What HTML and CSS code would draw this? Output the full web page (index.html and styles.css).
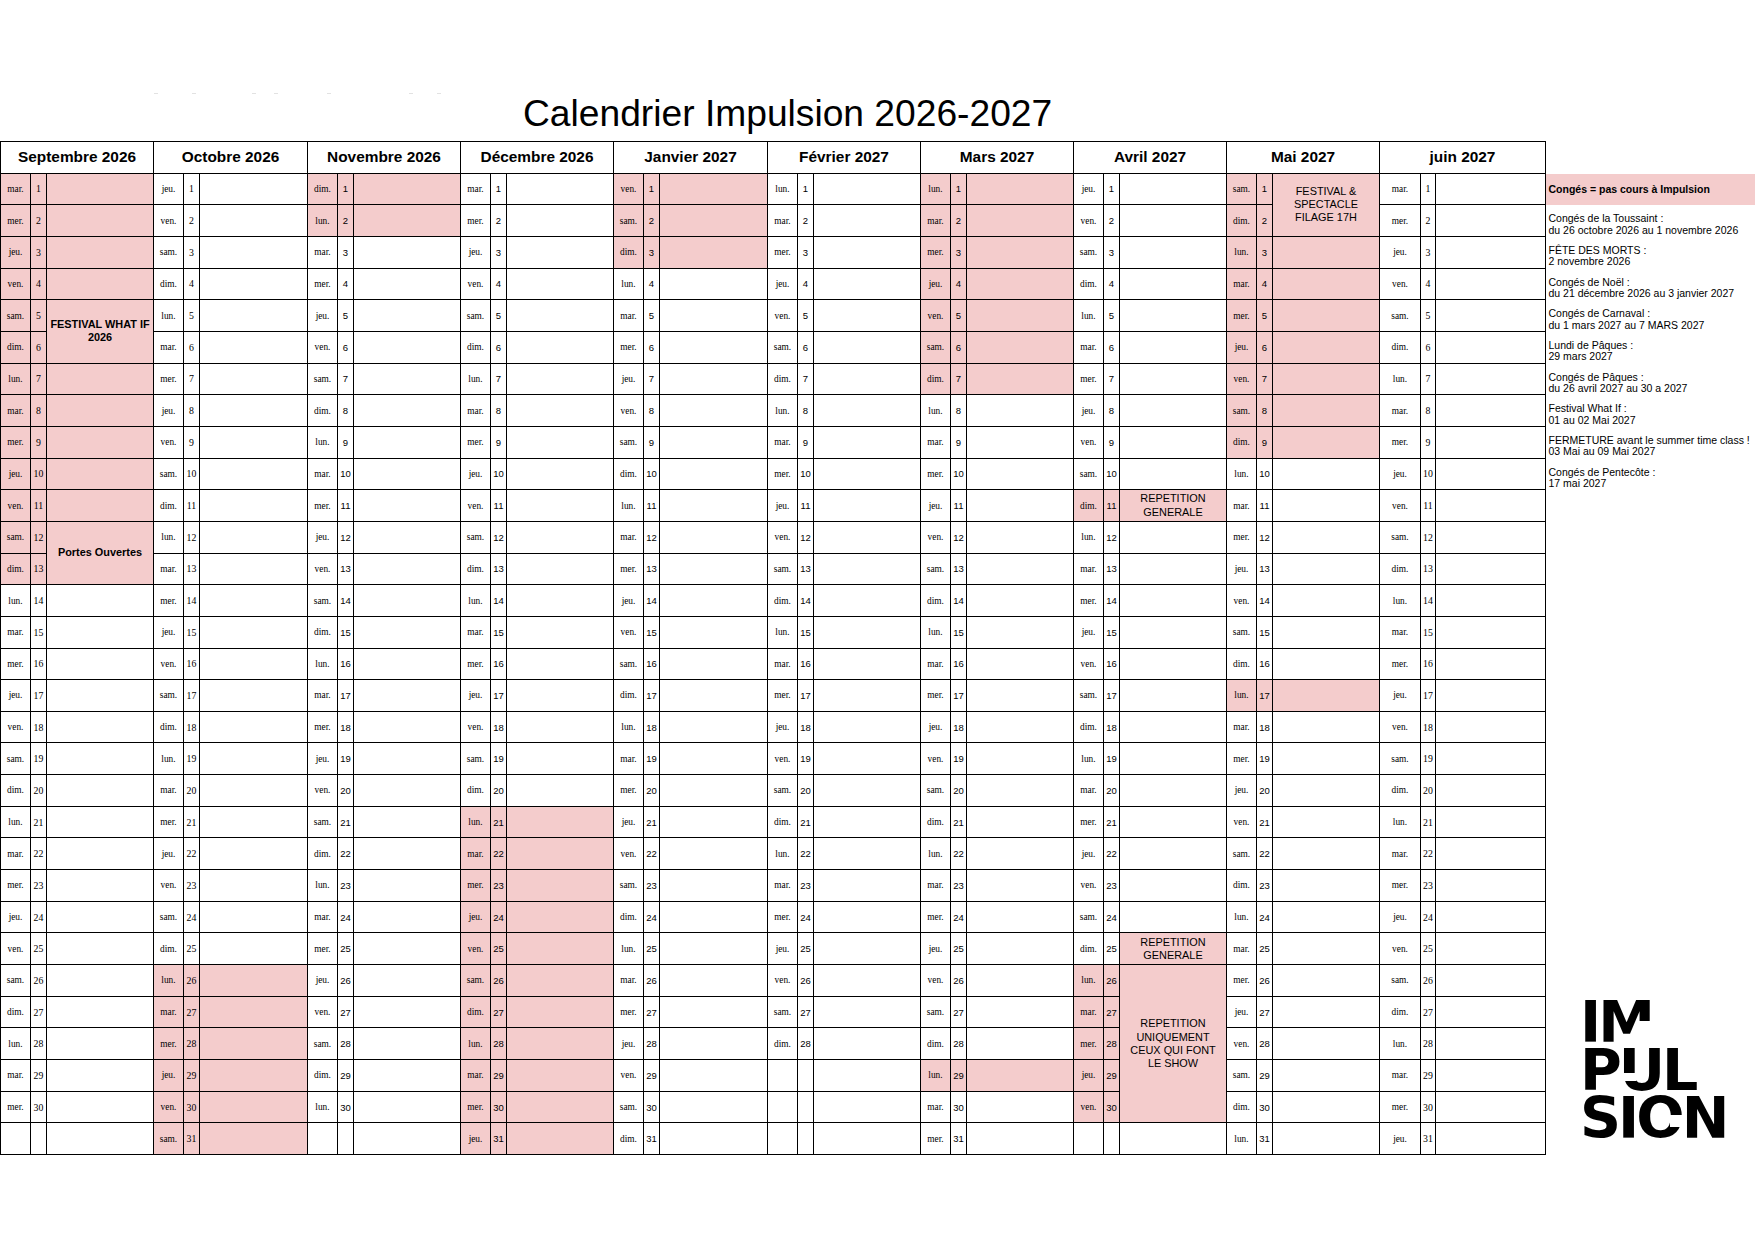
FILE: index.html
```html
<!DOCTYPE html>
<html lang="fr">
<head>
<meta charset="utf-8">
<title>Calendrier Impulsion 2026-2027</title>
<link rel="stylesheet" href="styles.css">
</head>
<body>
<div class="top">
  <div class="ghost"></div>
  <h1 class="title">Calendrier Impulsion 2026-2027</h1>
</div>
<div class="main">
<div class="cal">

<div class="m w154 serif">
<div class="mh">Septembre 2026</div>
<div class="d p">mar.</div><div class="n p">1</div><div class="e p"></div>
<div class="d p">mer.</div><div class="n p">2</div><div class="e p"></div>
<div class="d p">jeu.</div><div class="n p">3</div><div class="e p"></div>
<div class="d p">ven.</div><div class="n p">4</div><div class="e p"></div>
<div class="d p">sam.</div><div class="n p">5</div><div class="e p b r2">FESTIVAL WHAT IF<br>2026</div>
<div class="d p">dim.</div><div class="n p">6</div>
<div class="d p">lun.</div><div class="n p">7</div><div class="e p"></div>
<div class="d p">mar.</div><div class="n p">8</div><div class="e p"></div>
<div class="d p">mer.</div><div class="n p">9</div><div class="e p"></div>
<div class="d p">jeu.</div><div class="n p">10</div><div class="e p"></div>
<div class="d p">ven.</div><div class="n p">11</div><div class="e p"></div>
<div class="d p">sam.</div><div class="n p">12</div><div class="e p b r2">Portes Ouvertes</div>
<div class="d p">dim.</div><div class="n p">13</div>
<div class="d">lun.</div><div class="n">14</div><div class="e"></div>
<div class="d">mar.</div><div class="n">15</div><div class="e"></div>
<div class="d">mer.</div><div class="n">16</div><div class="e"></div>
<div class="d">jeu.</div><div class="n">17</div><div class="e"></div>
<div class="d">ven.</div><div class="n">18</div><div class="e"></div>
<div class="d">sam.</div><div class="n">19</div><div class="e"></div>
<div class="d">dim.</div><div class="n">20</div><div class="e"></div>
<div class="d">lun.</div><div class="n">21</div><div class="e"></div>
<div class="d">mar.</div><div class="n">22</div><div class="e"></div>
<div class="d">mer.</div><div class="n">23</div><div class="e"></div>
<div class="d">jeu.</div><div class="n">24</div><div class="e"></div>
<div class="d">ven.</div><div class="n">25</div><div class="e"></div>
<div class="d">sam.</div><div class="n">26</div><div class="e"></div>
<div class="d">dim.</div><div class="n">27</div><div class="e"></div>
<div class="d">lun.</div><div class="n">28</div><div class="e"></div>
<div class="d">mar.</div><div class="n">29</div><div class="e"></div>
<div class="d">mer.</div><div class="n">30</div><div class="e"></div>
<div class="d"></div><div class="n"></div><div class="e"></div>
</div>

<div class="m w154 serif">
<div class="mh">Octobre 2026</div>
<div class="d">jeu.</div><div class="n">1</div><div class="e"></div>
<div class="d">ven.</div><div class="n">2</div><div class="e"></div>
<div class="d">sam.</div><div class="n">3</div><div class="e"></div>
<div class="d">dim.</div><div class="n">4</div><div class="e"></div>
<div class="d">lun.</div><div class="n">5</div><div class="e"></div>
<div class="d">mar.</div><div class="n">6</div><div class="e"></div>
<div class="d">mer.</div><div class="n">7</div><div class="e"></div>
<div class="d">jeu.</div><div class="n">8</div><div class="e"></div>
<div class="d">ven.</div><div class="n">9</div><div class="e"></div>
<div class="d">sam.</div><div class="n">10</div><div class="e"></div>
<div class="d">dim.</div><div class="n">11</div><div class="e"></div>
<div class="d">lun.</div><div class="n">12</div><div class="e"></div>
<div class="d">mar.</div><div class="n">13</div><div class="e"></div>
<div class="d">mer.</div><div class="n">14</div><div class="e"></div>
<div class="d">jeu.</div><div class="n">15</div><div class="e"></div>
<div class="d">ven.</div><div class="n">16</div><div class="e"></div>
<div class="d">sam.</div><div class="n">17</div><div class="e"></div>
<div class="d">dim.</div><div class="n">18</div><div class="e"></div>
<div class="d">lun.</div><div class="n">19</div><div class="e"></div>
<div class="d">mar.</div><div class="n">20</div><div class="e"></div>
<div class="d">mer.</div><div class="n">21</div><div class="e"></div>
<div class="d">jeu.</div><div class="n">22</div><div class="e"></div>
<div class="d">ven.</div><div class="n">23</div><div class="e"></div>
<div class="d">sam.</div><div class="n">24</div><div class="e"></div>
<div class="d">dim.</div><div class="n">25</div><div class="e"></div>
<div class="d p">lun.</div><div class="n p">26</div><div class="e p"></div>
<div class="d p">mar.</div><div class="n p">27</div><div class="e p"></div>
<div class="d p">mer.</div><div class="n p">28</div><div class="e p"></div>
<div class="d p">jeu.</div><div class="n p">29</div><div class="e p"></div>
<div class="d p">ven.</div><div class="n p">30</div><div class="e p"></div>
<div class="d p">sam.</div><div class="n p">31</div><div class="e p"></div>
</div>

<div class="m">
<div class="mh">Novembre 2026</div>
<div class="d p">dim.</div><div class="n p">1</div><div class="e p"></div>
<div class="d p">lun.</div><div class="n p">2</div><div class="e p"></div>
<div class="d">mar.</div><div class="n">3</div><div class="e"></div>
<div class="d">mer.</div><div class="n">4</div><div class="e"></div>
<div class="d">jeu.</div><div class="n">5</div><div class="e"></div>
<div class="d">ven.</div><div class="n">6</div><div class="e"></div>
<div class="d">sam.</div><div class="n">7</div><div class="e"></div>
<div class="d">dim.</div><div class="n">8</div><div class="e"></div>
<div class="d">lun.</div><div class="n">9</div><div class="e"></div>
<div class="d">mar.</div><div class="n">10</div><div class="e"></div>
<div class="d">mer.</div><div class="n">11</div><div class="e"></div>
<div class="d">jeu.</div><div class="n">12</div><div class="e"></div>
<div class="d">ven.</div><div class="n">13</div><div class="e"></div>
<div class="d">sam.</div><div class="n">14</div><div class="e"></div>
<div class="d">dim.</div><div class="n">15</div><div class="e"></div>
<div class="d">lun.</div><div class="n">16</div><div class="e"></div>
<div class="d">mar.</div><div class="n">17</div><div class="e"></div>
<div class="d">mer.</div><div class="n">18</div><div class="e"></div>
<div class="d">jeu.</div><div class="n">19</div><div class="e"></div>
<div class="d">ven.</div><div class="n">20</div><div class="e"></div>
<div class="d">sam.</div><div class="n">21</div><div class="e"></div>
<div class="d">dim.</div><div class="n">22</div><div class="e"></div>
<div class="d">lun.</div><div class="n">23</div><div class="e"></div>
<div class="d">mar.</div><div class="n">24</div><div class="e"></div>
<div class="d">mer.</div><div class="n">25</div><div class="e"></div>
<div class="d">jeu.</div><div class="n">26</div><div class="e"></div>
<div class="d">ven.</div><div class="n">27</div><div class="e"></div>
<div class="d">sam.</div><div class="n">28</div><div class="e"></div>
<div class="d">dim.</div><div class="n">29</div><div class="e"></div>
<div class="d">lun.</div><div class="n">30</div><div class="e"></div>
<div class="d"></div><div class="n"></div><div class="e"></div>
</div>

<div class="m">
<div class="mh">Décembre 2026</div>
<div class="d">mar.</div><div class="n">1</div><div class="e"></div>
<div class="d">mer.</div><div class="n">2</div><div class="e"></div>
<div class="d">jeu.</div><div class="n">3</div><div class="e"></div>
<div class="d">ven.</div><div class="n">4</div><div class="e"></div>
<div class="d">sam.</div><div class="n">5</div><div class="e"></div>
<div class="d">dim.</div><div class="n">6</div><div class="e"></div>
<div class="d">lun.</div><div class="n">7</div><div class="e"></div>
<div class="d">mar.</div><div class="n">8</div><div class="e"></div>
<div class="d">mer.</div><div class="n">9</div><div class="e"></div>
<div class="d">jeu.</div><div class="n">10</div><div class="e"></div>
<div class="d">ven.</div><div class="n">11</div><div class="e"></div>
<div class="d">sam.</div><div class="n">12</div><div class="e"></div>
<div class="d">dim.</div><div class="n">13</div><div class="e"></div>
<div class="d">lun.</div><div class="n">14</div><div class="e"></div>
<div class="d">mar.</div><div class="n">15</div><div class="e"></div>
<div class="d">mer.</div><div class="n">16</div><div class="e"></div>
<div class="d">jeu.</div><div class="n">17</div><div class="e"></div>
<div class="d">ven.</div><div class="n">18</div><div class="e"></div>
<div class="d">sam.</div><div class="n">19</div><div class="e"></div>
<div class="d">dim.</div><div class="n">20</div><div class="e"></div>
<div class="d p">lun.</div><div class="n p">21</div><div class="e p"></div>
<div class="d p">mar.</div><div class="n p">22</div><div class="e p"></div>
<div class="d p">mer.</div><div class="n p">23</div><div class="e p"></div>
<div class="d p">jeu.</div><div class="n p">24</div><div class="e p"></div>
<div class="d p">ven.</div><div class="n p">25</div><div class="e p"></div>
<div class="d p">sam.</div><div class="n p">26</div><div class="e p"></div>
<div class="d p">dim.</div><div class="n p">27</div><div class="e p"></div>
<div class="d p">lun.</div><div class="n p">28</div><div class="e p"></div>
<div class="d p">mar.</div><div class="n p">29</div><div class="e p"></div>
<div class="d p">mer.</div><div class="n p">30</div><div class="e p"></div>
<div class="d p">jeu.</div><div class="n p">31</div><div class="e p"></div>
</div>

<div class="m w154">
<div class="mh">Janvier 2027</div>
<div class="d p">ven.</div><div class="n p">1</div><div class="e p"></div>
<div class="d p">sam.</div><div class="n p">2</div><div class="e p"></div>
<div class="d p">dim.</div><div class="n p">3</div><div class="e p"></div>
<div class="d">lun.</div><div class="n">4</div><div class="e"></div>
<div class="d">mar.</div><div class="n">5</div><div class="e"></div>
<div class="d">mer.</div><div class="n">6</div><div class="e"></div>
<div class="d">jeu.</div><div class="n">7</div><div class="e"></div>
<div class="d">ven.</div><div class="n">8</div><div class="e"></div>
<div class="d">sam.</div><div class="n">9</div><div class="e"></div>
<div class="d">dim.</div><div class="n">10</div><div class="e"></div>
<div class="d">lun.</div><div class="n">11</div><div class="e"></div>
<div class="d">mar.</div><div class="n">12</div><div class="e"></div>
<div class="d">mer.</div><div class="n">13</div><div class="e"></div>
<div class="d">jeu.</div><div class="n">14</div><div class="e"></div>
<div class="d">ven.</div><div class="n">15</div><div class="e"></div>
<div class="d">sam.</div><div class="n">16</div><div class="e"></div>
<div class="d">dim.</div><div class="n">17</div><div class="e"></div>
<div class="d">lun.</div><div class="n">18</div><div class="e"></div>
<div class="d">mar.</div><div class="n">19</div><div class="e"></div>
<div class="d">mer.</div><div class="n">20</div><div class="e"></div>
<div class="d">jeu.</div><div class="n">21</div><div class="e"></div>
<div class="d">ven.</div><div class="n">22</div><div class="e"></div>
<div class="d">sam.</div><div class="n">23</div><div class="e"></div>
<div class="d">dim.</div><div class="n">24</div><div class="e"></div>
<div class="d">lun.</div><div class="n">25</div><div class="e"></div>
<div class="d">mar.</div><div class="n">26</div><div class="e"></div>
<div class="d">mer.</div><div class="n">27</div><div class="e"></div>
<div class="d">jeu.</div><div class="n">28</div><div class="e"></div>
<div class="d">ven.</div><div class="n">29</div><div class="e"></div>
<div class="d">sam.</div><div class="n">30</div><div class="e"></div>
<div class="d">dim.</div><div class="n">31</div><div class="e"></div>
</div>

<div class="m">
<div class="mh">Février 2027</div>
<div class="d">lun.</div><div class="n">1</div><div class="e"></div>
<div class="d">mar.</div><div class="n">2</div><div class="e"></div>
<div class="d">mer.</div><div class="n">3</div><div class="e"></div>
<div class="d">jeu.</div><div class="n">4</div><div class="e"></div>
<div class="d">ven.</div><div class="n">5</div><div class="e"></div>
<div class="d">sam.</div><div class="n">6</div><div class="e"></div>
<div class="d">dim.</div><div class="n">7</div><div class="e"></div>
<div class="d">lun.</div><div class="n">8</div><div class="e"></div>
<div class="d">mar.</div><div class="n">9</div><div class="e"></div>
<div class="d">mer.</div><div class="n">10</div><div class="e"></div>
<div class="d">jeu.</div><div class="n">11</div><div class="e"></div>
<div class="d">ven.</div><div class="n">12</div><div class="e"></div>
<div class="d">sam.</div><div class="n">13</div><div class="e"></div>
<div class="d">dim.</div><div class="n">14</div><div class="e"></div>
<div class="d">lun.</div><div class="n">15</div><div class="e"></div>
<div class="d">mar.</div><div class="n">16</div><div class="e"></div>
<div class="d">mer.</div><div class="n">17</div><div class="e"></div>
<div class="d">jeu.</div><div class="n">18</div><div class="e"></div>
<div class="d">ven.</div><div class="n">19</div><div class="e"></div>
<div class="d">sam.</div><div class="n">20</div><div class="e"></div>
<div class="d">dim.</div><div class="n">21</div><div class="e"></div>
<div class="d">lun.</div><div class="n">22</div><div class="e"></div>
<div class="d">mar.</div><div class="n">23</div><div class="e"></div>
<div class="d">mer.</div><div class="n">24</div><div class="e"></div>
<div class="d">jeu.</div><div class="n">25</div><div class="e"></div>
<div class="d">ven.</div><div class="n">26</div><div class="e"></div>
<div class="d">sam.</div><div class="n">27</div><div class="e"></div>
<div class="d">dim.</div><div class="n">28</div><div class="e"></div>
<div class="d"></div><div class="n"></div><div class="e"></div>
<div class="d"></div><div class="n"></div><div class="e"></div>
<div class="d"></div><div class="n"></div><div class="e"></div>
</div>

<div class="m">
<div class="mh">Mars 2027</div>
<div class="d p">lun.</div><div class="n p">1</div><div class="e p"></div>
<div class="d p">mar.</div><div class="n p">2</div><div class="e p"></div>
<div class="d p">mer.</div><div class="n p">3</div><div class="e p"></div>
<div class="d p">jeu.</div><div class="n p">4</div><div class="e p"></div>
<div class="d p">ven.</div><div class="n p">5</div><div class="e p"></div>
<div class="d p">sam.</div><div class="n p">6</div><div class="e p"></div>
<div class="d p">dim.</div><div class="n p">7</div><div class="e p"></div>
<div class="d">lun.</div><div class="n">8</div><div class="e"></div>
<div class="d">mar.</div><div class="n">9</div><div class="e"></div>
<div class="d">mer.</div><div class="n">10</div><div class="e"></div>
<div class="d">jeu.</div><div class="n">11</div><div class="e"></div>
<div class="d">ven.</div><div class="n">12</div><div class="e"></div>
<div class="d">sam.</div><div class="n">13</div><div class="e"></div>
<div class="d">dim.</div><div class="n">14</div><div class="e"></div>
<div class="d">lun.</div><div class="n">15</div><div class="e"></div>
<div class="d">mar.</div><div class="n">16</div><div class="e"></div>
<div class="d">mer.</div><div class="n">17</div><div class="e"></div>
<div class="d">jeu.</div><div class="n">18</div><div class="e"></div>
<div class="d">ven.</div><div class="n">19</div><div class="e"></div>
<div class="d">sam.</div><div class="n">20</div><div class="e"></div>
<div class="d">dim.</div><div class="n">21</div><div class="e"></div>
<div class="d">lun.</div><div class="n">22</div><div class="e"></div>
<div class="d">mar.</div><div class="n">23</div><div class="e"></div>
<div class="d">mer.</div><div class="n">24</div><div class="e"></div>
<div class="d">jeu.</div><div class="n">25</div><div class="e"></div>
<div class="d">ven.</div><div class="n">26</div><div class="e"></div>
<div class="d">sam.</div><div class="n">27</div><div class="e"></div>
<div class="d">dim.</div><div class="n">28</div><div class="e"></div>
<div class="d p">lun.</div><div class="n p">29</div><div class="e p"></div>
<div class="d">mar.</div><div class="n">30</div><div class="e"></div>
<div class="d">mer.</div><div class="n">31</div><div class="e"></div>
</div>

<div class="m">
<div class="mh">Avril 2027</div>
<div class="d">jeu.</div><div class="n">1</div><div class="e"></div>
<div class="d">ven.</div><div class="n">2</div><div class="e"></div>
<div class="d">sam.</div><div class="n">3</div><div class="e"></div>
<div class="d">dim.</div><div class="n">4</div><div class="e"></div>
<div class="d">lun.</div><div class="n">5</div><div class="e"></div>
<div class="d">mar.</div><div class="n">6</div><div class="e"></div>
<div class="d">mer.</div><div class="n">7</div><div class="e"></div>
<div class="d">jeu.</div><div class="n">8</div><div class="e"></div>
<div class="d">ven.</div><div class="n">9</div><div class="e"></div>
<div class="d">sam.</div><div class="n">10</div><div class="e"></div>
<div class="d p">dim.</div><div class="n p">11</div><div class="e p">REPETITION<br>GENERALE</div>
<div class="d">lun.</div><div class="n">12</div><div class="e"></div>
<div class="d">mar.</div><div class="n">13</div><div class="e"></div>
<div class="d">mer.</div><div class="n">14</div><div class="e"></div>
<div class="d">jeu.</div><div class="n">15</div><div class="e"></div>
<div class="d">ven.</div><div class="n">16</div><div class="e"></div>
<div class="d">sam.</div><div class="n">17</div><div class="e"></div>
<div class="d">dim.</div><div class="n">18</div><div class="e"></div>
<div class="d">lun.</div><div class="n">19</div><div class="e"></div>
<div class="d">mar.</div><div class="n">20</div><div class="e"></div>
<div class="d">mer.</div><div class="n">21</div><div class="e"></div>
<div class="d">jeu.</div><div class="n">22</div><div class="e"></div>
<div class="d">ven.</div><div class="n">23</div><div class="e"></div>
<div class="d">sam.</div><div class="n">24</div><div class="e"></div>
<div class="d">dim.</div><div class="n">25</div><div class="e p">REPETITION<br>GENERALE</div>
<div class="d p">lun.</div><div class="n p">26</div><div class="e p r5">REPETITION<br>UNIQUEMENT<br>CEUX QUI FONT<br>LE SHOW</div>
<div class="d p">mar.</div><div class="n p">27</div>
<div class="d p">mer.</div><div class="n p">28</div>
<div class="d p">jeu.</div><div class="n p">29</div>
<div class="d p">ven.</div><div class="n p">30</div>
<div class="d"></div><div class="n"></div><div class="e"></div>
</div>

<div class="m">
<div class="mh">Mai 2027</div>
<div class="d p">sam.</div><div class="n p">1</div><div class="e p r2">FESTIVAL &amp;<br>SPECTACLE<br>FILAGE 17H</div>
<div class="d p">dim.</div><div class="n p">2</div>
<div class="d p">lun.</div><div class="n p">3</div><div class="e p"></div>
<div class="d p">mar.</div><div class="n p">4</div><div class="e p"></div>
<div class="d p">mer.</div><div class="n p">5</div><div class="e p"></div>
<div class="d p">jeu.</div><div class="n p">6</div><div class="e p"></div>
<div class="d p">ven.</div><div class="n p">7</div><div class="e p"></div>
<div class="d p">sam.</div><div class="n p">8</div><div class="e p"></div>
<div class="d p">dim.</div><div class="n p">9</div><div class="e p"></div>
<div class="d">lun.</div><div class="n">10</div><div class="e"></div>
<div class="d">mar.</div><div class="n">11</div><div class="e"></div>
<div class="d">mer.</div><div class="n">12</div><div class="e"></div>
<div class="d">jeu.</div><div class="n">13</div><div class="e"></div>
<div class="d">ven.</div><div class="n">14</div><div class="e"></div>
<div class="d">sam.</div><div class="n">15</div><div class="e"></div>
<div class="d">dim.</div><div class="n">16</div><div class="e"></div>
<div class="d p">lun.</div><div class="n p">17</div><div class="e p"></div>
<div class="d">mar.</div><div class="n">18</div><div class="e"></div>
<div class="d">mer.</div><div class="n">19</div><div class="e"></div>
<div class="d">jeu.</div><div class="n">20</div><div class="e"></div>
<div class="d">ven.</div><div class="n">21</div><div class="e"></div>
<div class="d">sam.</div><div class="n">22</div><div class="e"></div>
<div class="d">dim.</div><div class="n">23</div><div class="e"></div>
<div class="d">lun.</div><div class="n">24</div><div class="e"></div>
<div class="d">mar.</div><div class="n">25</div><div class="e"></div>
<div class="d">mer.</div><div class="n">26</div><div class="e"></div>
<div class="d">jeu.</div><div class="n">27</div><div class="e"></div>
<div class="d">ven.</div><div class="n">28</div><div class="e"></div>
<div class="d">sam.</div><div class="n">29</div><div class="e"></div>
<div class="d">dim.</div><div class="n">30</div><div class="e"></div>
<div class="d">lun.</div><div class="n">31</div><div class="e"></div>
</div>

<div class="m jun serif">
<div class="mh">juin 2027</div>
<div class="d">mar.</div><div class="n">1</div><div class="e"></div>
<div class="d">mer.</div><div class="n">2</div><div class="e"></div>
<div class="d">jeu.</div><div class="n">3</div><div class="e"></div>
<div class="d">ven.</div><div class="n">4</div><div class="e"></div>
<div class="d">sam.</div><div class="n">5</div><div class="e"></div>
<div class="d">dim.</div><div class="n">6</div><div class="e"></div>
<div class="d">lun.</div><div class="n">7</div><div class="e"></div>
<div class="d">mar.</div><div class="n">8</div><div class="e"></div>
<div class="d">mer.</div><div class="n">9</div><div class="e"></div>
<div class="d">jeu.</div><div class="n">10</div><div class="e"></div>
<div class="d">ven.</div><div class="n">11</div><div class="e"></div>
<div class="d">sam.</div><div class="n">12</div><div class="e"></div>
<div class="d">dim.</div><div class="n">13</div><div class="e"></div>
<div class="d">lun.</div><div class="n">14</div><div class="e"></div>
<div class="d">mar.</div><div class="n">15</div><div class="e"></div>
<div class="d">mer.</div><div class="n">16</div><div class="e"></div>
<div class="d">jeu.</div><div class="n">17</div><div class="e"></div>
<div class="d">ven.</div><div class="n">18</div><div class="e"></div>
<div class="d">sam.</div><div class="n">19</div><div class="e"></div>
<div class="d">dim.</div><div class="n">20</div><div class="e"></div>
<div class="d">lun.</div><div class="n">21</div><div class="e"></div>
<div class="d">mar.</div><div class="n">22</div><div class="e"></div>
<div class="d">mer.</div><div class="n">23</div><div class="e"></div>
<div class="d">jeu.</div><div class="n">24</div><div class="e"></div>
<div class="d">ven.</div><div class="n">25</div><div class="e"></div>
<div class="d">sam.</div><div class="n">26</div><div class="e"></div>
<div class="d">dim.</div><div class="n">27</div><div class="e"></div>
<div class="d">lun.</div><div class="n">28</div><div class="e"></div>
<div class="d">mar.</div><div class="n">29</div><div class="e"></div>
<div class="d">mer.</div><div class="n">30</div><div class="e"></div>
<div class="d">jeu.</div><div class="n">31</div><div class="e"></div>
</div>

</div>

<aside class="side">
  <div class="legend">
    <div class="li hd">Congés = pas cours à Impulsion</div>
    <div class="li"><span>Congés de la Toussaint :</span><span>du 26 octobre 2026 au 1 novembre 2026</span></div>
    <div class="li"><span>FÊTE DES MORTS :</span><span>2 novembre 2026</span></div>
    <div class="li"><span>Congés de Noël :</span><span>du 21 décembre 2026 au 3 janvier 2027</span></div>
    <div class="li"><span>Congés de Carnaval :</span><span>du 1 mars 2027 au 7 MARS 2027</span></div>
    <div class="li"><span>Lundi de Pâques :</span><span>29 mars 2027</span></div>
    <div class="li"><span>Congés de Pâques :</span><span>du 26 avril 2027 au 30 a 2027</span></div>
    <div class="li"><span>Festival What If :</span><span>01 au 02 Mai 2027</span></div>
    <div class="li"><span>FERMETURE avant le summer time class !</span><span>03 Mai au 09 Mai 2027</span></div>
    <div class="li"><span>Congés de Pentecôte :</span><span>17 mai 2027</span></div>
  </div>
  <div class="logo" aria-label="Impulsion">
    <div class="ll">IM</div>
    <div class="ll">PUL</div>
    <div class="ll">SION</div>
    <span class="cut cut-m"></span>
    <span class="cut cut-u"></span>
    <span class="cut cut-o"></span>
  </div>
</aside>
</div>
</body>
</html>
```
FILE: styles.css
```css
* { box-sizing: border-box; margin: 0; padding: 0; }

body {
  margin: 0;
  width: 1755px;
  height: 1240px;
  overflow: hidden;
  background: #fff;
  color: #000;
  font-family: "Liberation Sans", Arial, sans-serif;
}

.top {
  height: 141px;
  display: grid;
}

.ghost, .title { grid-area: 1 / 1; }

.ghost {
  margin-top: 93px;
  width: 450px;
  height: 1px;
  background:
    linear-gradient(#e2e2e2, #e2e2e2) 154px 0 / 4px 1px no-repeat,
    linear-gradient(#e2e2e2, #e2e2e2) 192px 0 / 4px 1px no-repeat,
    linear-gradient(#e2e2e2, #e2e2e2) 252px 0 / 4px 1px no-repeat,
    linear-gradient(#e2e2e2, #e2e2e2) 274px 0 / 4px 1px no-repeat,
    linear-gradient(#e2e2e2, #e2e2e2) 327px 0 / 4px 1px no-repeat,
    linear-gradient(#e2e2e2, #e2e2e2) 409px 0 / 4px 1px no-repeat,
    linear-gradient(#e2e2e2, #e2e2e2) 437px 0 / 4px 1px no-repeat;
}

.title {
  margin-top: 91.5px;
  padding-left: 523px;
  height: 42px;
  font-size: 37.2px;
  line-height: 42px;
  font-weight: 400;
  white-space: nowrap;
}

.main {
  display: flex;
  align-items: flex-start;
}

.cal { display: flex; }

.m {
  width: 153px;
  display: grid;
  grid-template-columns: 30px 16px 1fr;
  grid-template-rows: repeat(32, 31.67px);
  border-top: 1px solid #000;
}
.m.w154 { width: 154px; }
.m:first-child { border-left: 1px solid #000; }
.m.jun {
  width: 166px;
  grid-template-columns: 41px 15px 1fr;
}

.mh {
  grid-column: 1 / -1;
  display: flex;
  align-items: center;
  justify-content: center;
  font-weight: 700;
  font-size: 15.4px;
  white-space: nowrap;
  border-right: 1px solid #000;
  border-bottom: 1px solid #000;
}

.d, .n, .e {
  display: flex;
  align-items: center;
  justify-content: center;
  border-right: 1px solid #000;
  border-bottom: 1px solid #000;
  overflow: hidden;
  white-space: nowrap;
}

.d {
  grid-column: 1;
  font-family: "Liberation Serif", "Times New Roman", serif;
  font-size: 9.33px;
}

.n {
  grid-column: 2;
  font-size: 9.5px;
}
.serif .n { font-family: "Liberation Serif", "Times New Roman", serif; font-size: 9.8px; }

.e {
  grid-column: 3;
  font-size: 10.9px;
  line-height: 13.2px;
  text-align: center;
}

.p { background: #f4cccc; }
.b { font-weight: 700; }
.r2 { grid-row: span 2; }
.r5 { grid-row: span 5; }

.side {
  width: 209px;
  padding-top: 32.67px;
}

.legend {
  display: grid;
  grid-template-rows: repeat(10, 31.67px);
}

.li {
  display: flex;
  flex-direction: column;
  justify-content: flex-end;
  padding: 0 0 1px 2.5px;
  font-size: 10.5px;
  line-height: 11.3px;
  white-space: nowrap;
}
.li.hd {
  justify-content: center;
  background: #f4cccc;
  font-weight: 700;
  padding-bottom: 0;
}

.logo {
  position: relative;
  margin: 507.6px 0 0 34px;
  font-family: "DejaVu Sans", Verdana, sans-serif;
  font-weight: 700;
  font-size: 57px;
  line-height: 48.3px;
  letter-spacing: -3px;
  color: #000;
}
.ll { height: 48.3px; white-space: nowrap; }

.cut {
  position: absolute;
  background: #fff;
}
.cut-m { left: 59px; top: 23px; width: 12px; height: 24px; }
.cut-u { left: 42px; top: 75px; width: 14px; height: 8px; }
.cut-o { left: 90px; top: 117px; width: 14px; height: 12px; }
```
